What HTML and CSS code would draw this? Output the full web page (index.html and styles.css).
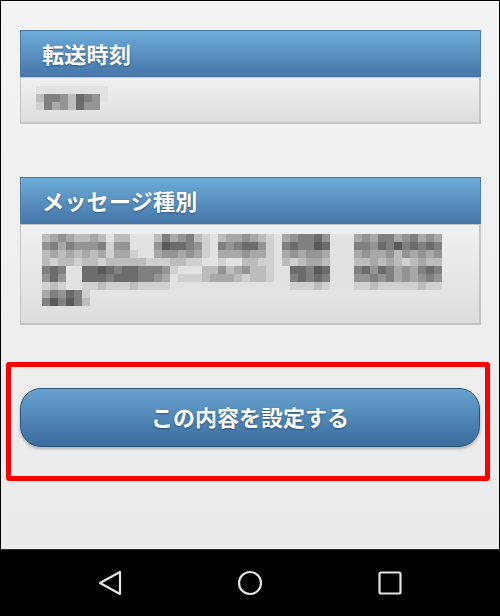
FILE: index.html
```html
<!DOCTYPE html>
<html lang="ja">
<head>
    <meta charset="UTF-8">
    <meta name="viewport" content="width=device-width, initial-scale=1.0">
    <title>転送設定</title>
    <link rel="stylesheet" href="styles.css">
</head>
<body>

    <div class="screen">
        <!-- 転送時刻 -->
        <section class="panel">
            <h2 class="panel-head">転送時刻</h2>
            <div class="panel-body time-body">
                <div class="mosaic" data-rows="111111111/366537651/264537550"></div>
            </div>
        </section>

        <!-- メッセージ種別 -->
        <section class="panel panel-second">
            <h2 class="panel-head">メッセージ種別</h2>
            <div class="panel-body type-body">
                <div class="mosaic" data-rows="34543343.1.33.111.364563.21.344543.21.456675.111.45466456454/56465556.2.55.111.587765.21.656775.21.676687.111.66576867676/34343434.2.44.211.455454.21.444544.21.454554.111.45445354545/32332332.3.33.332.223322.11.211332.21.323443.111.33434323433/676.11.778767766652.111.33534533211.77687.111.67576454676/575.11.777677766541.222.34443233211.67676.111.55656454565/232.11.223222322221.111.11111111111.22232.111.22322222322/465762/686863"></div>
            </div>
        </section>

        <!-- 設定ボタン -->
        <div class="mark">
            <button class="btn-set">この内容を設定する</button>
        </div>
    </div>

    <nav class="navbar">
        <svg class="nav-icon" viewBox="0 0 26 26"><path d="M3 13 L23 2 L23 24 Z"/></svg>
        <svg class="nav-icon" viewBox="0 0 26 26"><circle cx="13" cy="13" r="11"/></svg>
        <svg class="nav-icon" viewBox="0 0 26 26"><rect x="2.5" y="2.5" width="21" height="21" rx="1.5"/></svg>
    </nav>

    <script>
        const greys = ['transparent', '#e2e2e2', '#d0d0d0', '#bcbcbc', '#a8a8a8', '#949494', '#808080', '#6c6c6c', '#5a5a5a', '#4a4a4a'];

        document.querySelectorAll('.mosaic').forEach(mosaic => {
            mosaic.dataset.rows.split('/').forEach(row => {
                let line = document.createElement('div');
                line.className = 'mosaic-row';
                row.replace(/\./g, '').split('').forEach(level => {
                    let cell = document.createElement('span');
                    cell.className = 'cell';
                    cell.style.background = greys[+level];
                    line.appendChild(cell);
                });
                mosaic.appendChild(line);
            });
        });
    </script>

</body>
</html>
```

FILE: styles.css
```css
* {
    margin: 0;
    padding: 0;
    box-sizing: border-box;
}

body {
    width: 500px;
    height: 616px;
    background: #000;
    font-family: "Noto Sans CJK JP", "Noto Sans", sans-serif;
    overflow: hidden;
}

.screen {
    height: 549px;
    border: 1px solid #000;
    border-bottom: none;
    padding: 29px 18px 0 19px;
    background: linear-gradient(#f3f3f3, #ebebeb);
}

.panel-second {
    margin-top: 53px;
}

.panel-head {
    display: flex;
    align-items: center;
    height: 47px;
    padding-left: 21px;
    padding-bottom: 2px;
    border: 1px solid #4a79aa;
    border-bottom: none;
    background: linear-gradient(#6dacd9, #4575a8);
    color: #fff;
    font-size: 22px;
    font-weight: 700;
    letter-spacing: 0.3px;
    text-shadow: 0 1px 2px rgba(0, 0, 0, 0.35);
}

.panel-body {
    border: 1px solid #c4c4c4;
    border-right-width: 2px;
    border-bottom-width: 2px;
    background: linear-gradient(#f1f1f1, #dddddd);
}

.time-body {
    height: 47px;
    padding: 8px 0 0 15px;
}

.type-body {
    height: 101px;
    padding: 9px 0 0 21px;
}

.mosaic-row {
    display: flex;
}

.cell {
    width: 8px;
    height: 8px;
}

.mark {
    margin: 37px -9px 0 -14px;
    padding: 21px 5px 29px 9px;
    border: 5px solid #ff0000;
    border-radius: 3px;
}

.btn-set {
    display: block;
    width: 100%;
    height: 59px;
    padding-bottom: 3px;
    border: 1px solid #2b5378;
    border-radius: 21px;
    background: linear-gradient(#67a2cf, #3a6c9d);
    box-shadow: 0 2px 3px rgba(0, 0, 0, 0.25);
    color: #fff;
    font-family: inherit;
    font-size: 22px;
    font-weight: 700;
    text-shadow: 0 1px 2px rgba(0, 0, 0, 0.4);
    cursor: pointer;
}

.navbar {
    display: flex;
    justify-content: center;
    align-items: center;
    gap: 114px;
    height: 67px;
    border-top: 1px solid #2a2a2a;
    background: #000;
}

.nav-icon {
    width: 26px;
    height: 26px;
    fill: none;
    stroke: #e4e4e4;
    stroke-width: 2.2;
    stroke-linejoin: round;
}
```
